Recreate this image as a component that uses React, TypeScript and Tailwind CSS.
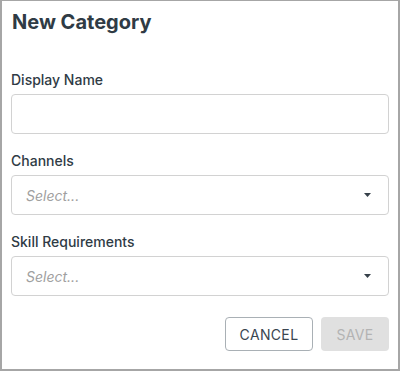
function Field({ label, select }: { label: string; select?: boolean }) {
  return (
    <div className="flex flex-col">
      <label className="h-5 text-[14px] font-medium leading-5 text-[#2f3b45]">{label}</label>
      <div className="mt-1 flex h-10 items-center justify-between rounded border border-[#d2d2d2] bg-white pl-[14px] pr-[17px]">
        {select ? (
          <>
            <span className="text-[14px] italic text-[#a0a0a0]">Select...</span>
            {/* small solid caret */}
            <svg width="7" height="4" viewBox="0 0 7 4" className="text-[#36414a]">
              <path d="M0 0h7L3.5 4z" fill="currentColor" />
            </svg>
          </>
        ) : null}
      </div>
    </div>
  );
}

export default function App() {
  return (
    <div className="h-[371px] w-[400px] border-x-2 border-b-2 border-t border-[#a6a6a6] bg-white font-['Inter',sans-serif]">
      <div className="flex flex-col px-[9px] pt-[7px]">
        <h1 className="pl-[1px] text-[20px] font-bold leading-7 text-[#2f3b45]">New Category</h1>

        <div className="mt-[34px] flex flex-col gap-[17px]">
          <Field label="Display Name" />
          <Field label="Channels" select />
          <Field label="Skill Requirements" select />
        </div>

        {/* FOOTER ACTIONS */}
        <div className="mt-[21px] flex justify-end gap-[8px]">
          <button className="h-[34px] w-[88px] rounded border border-[#a9b0b5] bg-white text-[14px] tracking-wide text-[#3a4550]">
            CANCEL
          </button>
          <button
            disabled
            className="h-[34px] w-[68px] rounded bg-[#e0e0e0] text-[14px] tracking-wide text-[#b3b3b3]"
          >
            SAVE
          </button>
        </div>
      </div>
    </div>
  );
}
